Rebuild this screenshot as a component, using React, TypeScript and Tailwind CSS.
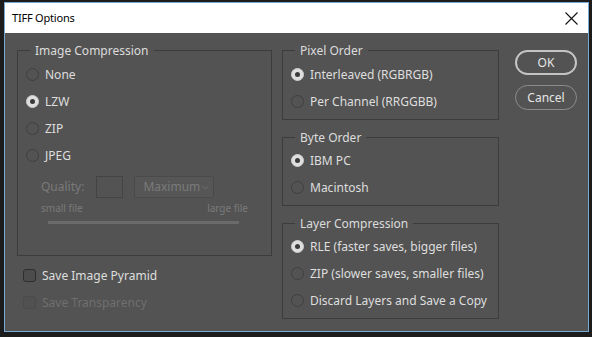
import React from "react";

const font = { fontFamily: '"Noto Sans", "Open Sans", sans-serif' };

function Radio({ label, checked, disabled }: { label: string; checked?: boolean; disabled?: boolean }) {
  return (
    <div className="flex h-[27px] items-center">
      <div
        className={
          "flex h-[13px] w-[13px] items-center justify-center rounded-full border " +
          (checked ? "border-[#cfcfcf] bg-[#dedede]" : "border-[#404040] bg-[#535353]")
        }
      >
        {checked && <div className="h-[5px] w-[5px] rounded-full bg-[#3a3a3a]" />}
      </div>
      <span className={"ml-[6px] text-[12px] " + (disabled ? "text-[#7a7a7a]" : "text-[#dedede]")}>{label}</span>
    </div>
  );
}

function Check({ label, disabled }: { label: string; disabled?: boolean }) {
  return (
    <div className="flex h-[27px] items-center">
      <div
        className={
          "h-[13px] w-[13px] rounded-[3px] border " +
          (disabled ? "border-[#4a4a4a] bg-[#515151]" : "border-[#2e2e2e] bg-[#4c4c4c]")
        }
      />
      <span className={"ml-[6px] text-[12px] " + (disabled ? "text-[#6f6f6f]" : "text-[#dedede]")}>{label}</span>
    </div>
  );
}

function Group({ title, className, children }: { title: string; className: string; children: React.ReactNode }) {
  return (
    <div className={"relative border border-[#3c3c3c] " + className}>
      <span className="absolute left-[12px] top-0 -translate-y-1/2 bg-[#535353] px-[5px] text-[12px] leading-[14px] text-[#dcdcdc]">
        {title}
      </span>
      {children}
    </div>
  );
}

export default function App() {
  return (
    <div className="h-[337px] w-[592px] bg-[#1c1c1c] pl-[4px] pt-[2px]" style={font}>
      <div className="flex h-[330px] w-[585px] flex-col border border-[#76aad6] bg-[#535353]">
        <div className="flex h-[30px] items-center justify-between bg-white pl-[7px] pr-[10px]">
          <span className="text-[11px] tracking-[-0.2px] text-black">TIFF Options</span>
          <svg width="13" height="13" viewBox="0 0 13 13">
            <path d="M0.5 0.5 L12.5 12.5 M12.5 0.5 L0.5 12.5" stroke="#111" strokeWidth="1.1" />
          </svg>
        </div>
        <div className="flex pl-[12px] pt-[17px]">
          <div className="flex w-[255px] flex-col">
            <Group title="Image Compression" className="h-[206px] pl-[8px] pt-[10px]">
              <Radio label="None" />
              <Radio label="LZW" checked />
              <Radio label="ZIP" />
              <Radio label="JPEG" />
              <div className="ml-[15px] mt-[7px] flex items-center">
                <span className="text-[12px] text-[#7a7a7a]">Quality:</span>
                <div className="ml-[12px] h-[22px] w-[27px] border border-[#444] bg-[#535353]" />
                <div className="ml-[11px] flex h-[22px] w-[80px] items-center justify-between rounded-[2px] border border-[#4a4a4a] bg-[#565656] pl-[8px] pr-[4px]">
                  <span className="text-[12px] text-[#7a7a7a]">Maximum</span>
                  <svg width="7" height="5" viewBox="0 0 7 5">
                    <path d="M0.5 1 L3.5 4 L6.5 1" stroke="#6e6e6e" fill="none" />
                  </svg>
                </div>
              </div>
              <div className="ml-[15px] mr-[23px] mt-[2px] flex justify-between text-[10px] leading-[16px] text-[#7a7a7a]">
                <span>small file</span>
                <span>large file</span>
              </div>
              <div className="ml-[22px] mt-[5px] h-[3px] w-[191px] bg-[#6b6b6b]" />
            </Group>
            <div className="mt-[6px] pl-[6px]">
              <Check label="Save Image Pyramid" />
              <Check label="Save Transparency" disabled />
            </div>
          </div>
          <div className="ml-[10px] flex w-[217px] flex-col">
            <Group title="Pixel Order" className="h-[70px] pl-[8px] pt-[10px]">
              <Radio label="Interleaved (RGBRGB)" checked />
              <Radio label="Per Channel (RRGGBB)" />
            </Group>
            <Group title="Byte Order" className="mt-[17px] h-[69px] pl-[8px] pt-[9px]">
              <Radio label="IBM PC" checked />
              <Radio label="Macintosh" />
            </Group>
            <Group title="Layer Compression" className="mt-[17px] h-[96px] pl-[8px] pt-[9px]">
              <Radio label="RLE (faster saves, bigger files)" checked />
              <Radio label="ZIP (slower saves, smaller files)" />
              <Radio label="Discard Layers and Save a Copy" />
            </Group>
          </div>
          <div className="ml-[16px] flex w-[62px] flex-col">
            <div className="flex h-[25px] items-center justify-center rounded-full border-2 border-[#c4c4c4] text-[12px] text-[#e6e6e6]">
              OK
            </div>
            <div className="mt-[10px] flex h-[25px] items-center justify-center rounded-full border border-[#8c8c8c] text-[12px] text-[#e6e6e6]">
              Cancel
            </div>
          </div>
        </div>
      </div>
    </div>
  );
}
